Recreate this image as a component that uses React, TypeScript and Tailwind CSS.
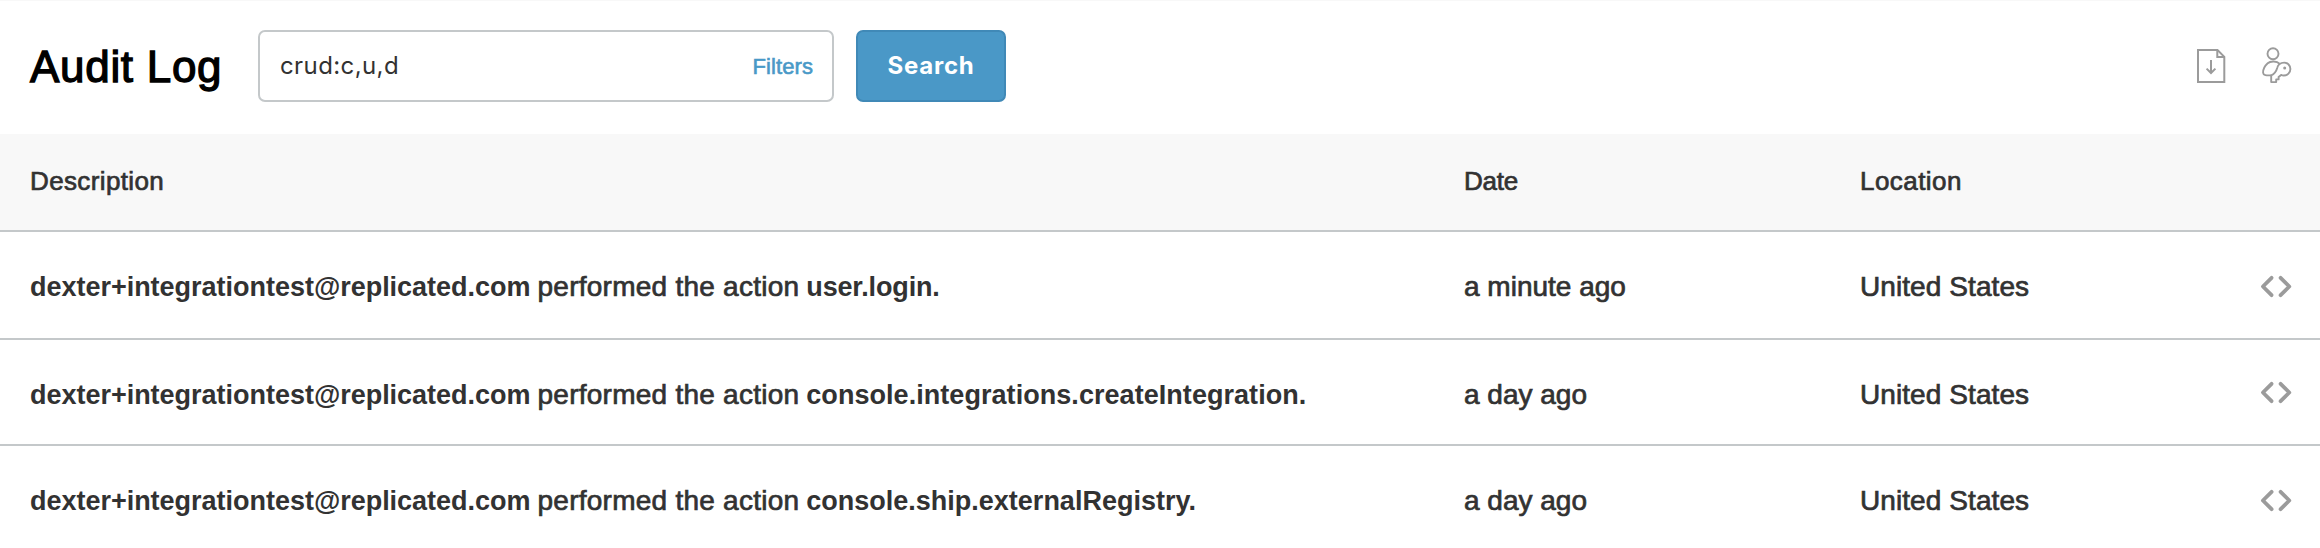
type AuditEvent = {
  actor: string;
  action: string;
  date: string;
  location: string;
  rowClass: string;
  iconClass: string;
  actionClass: string;
};

const events: AuditEvent[] = [
  {
    actor: "dexter+integrationtest@replicated.com",
    action: "user.login.",
    date: "a minute ago",
    location: "United States",
    rowClass: "h-[108px] border-b-2",
    iconClass: "mt-[3px]",
    actionClass: "tracking-[-0.15px]",
  },
  {
    actor: "dexter+integrationtest@replicated.com",
    action: "console.integrations.createIntegration.",
    date: "a day ago",
    location: "United States",
    rowClass: "h-[106px] border-b-2",
    iconClass: "mt-px",
    actionClass: "tracking-[0.05px]",
  },
  {
    actor: "dexter+integrationtest@replicated.com",
    action: "console.ship.externalRegistry.",
    date: "a day ago",
    location: "United States",
    rowClass: "h-[102px]",
    iconClass: "mt-[3px]",
    actionClass: "tracking-[0px]",
  },
];

function ExportIcon() {
  return (
    <svg width="34" height="40" viewBox="0 0 34 40" fill="none" stroke="#9b9b9b" strokeWidth="2">
      <path d="M3 4H22.5L29.3 10.8V36H3Z" />
      <path d="M22.3 4V11H29.3" />
      <path d="M16 14V27M11.6 22.6L16 27L20.4 22.6" />
    </svg>
  );
}

function AccessIcon() {
  return (
    <svg
      width="34"
      height="40"
      viewBox="0 0 34 40"
      fill="none"
      stroke="#9b9b9b"
      strokeWidth="1.9"
      strokeLinejoin="round"
    >
      <circle cx="13" cy="7.8" r="5.5" />
      <path d="M19.4 17.6C17 14.9 10.5 14.7 7.7 17.2C4.6 20 2.9 23.8 3.1 26.8C3.3 29.6 6.2 29.5 11.2 29.4" />
      <path d="M11.2 36.1V29.4C15 27.6 16.2 25.4 17.2 21.9C18 18.6 21 16.6 24.2 16.6C27.6 16.6 30.4 19.5 30.4 22.9C30.4 26.6 27.4 29.5 23.8 29.5C22.6 29.5 21.9 29.3 21.1 28.9L18.6 31V33.4H16.2V36.1Z" />
      <circle cx="24.7" cy="22" r="1.5" fill="#9b9b9b" stroke="none" />
    </svg>
  );
}

function CodeIcon() {
  return (
    <svg
      width="32"
      height="25"
      viewBox="0 0 32 25"
      fill="none"
      stroke="#9b9b9b"
      strokeWidth="3.8"
      strokeLinecap="round"
      strokeLinejoin="round"
    >
      <path d="M11.6 3.8L2.9 12.5L11.6 21.2" />
      <path d="M20.6 3.8L29.3 12.5L20.6 21.2" />
    </svg>
  );
}

export default function App() {
  return (
    <div className="h-[548px] w-[2320px] overflow-hidden bg-white font-['Liberation_Sans',Arial,sans-serif] text-[#323232]">
      <header className="flex h-[134px] items-start border-t border-[#f8f8f8] pr-[26px] pl-[30px]">
        <h1 className="mt-[42px] w-[228px] text-[44px] leading-[48px] tracking-[0.7px] whitespace-nowrap text-black [-webkit-text-stroke:1.3px_#000]">
          Audit Log
        </h1>
        <div className="mt-[29px] flex h-[72px] w-[576px] items-center justify-between rounded-[7px] border-2 border-[#c4c8ca] pr-[19px] pl-[20px]">
          <span className="font-['Inter',sans-serif] text-[24px] leading-8 tracking-[0.4px]">crud:c,u,d</span>
          <span className="pt-px text-[22px] leading-8 tracking-[0.1px] text-[#4999c7] [-webkit-text-stroke:0.6px_#4999c7]">
            Filters
          </span>
        </div>
        <button className="mt-[29px] ml-[22px] flex h-[72px] w-[150px] items-center justify-center rounded-[7px] border-2 border-[#4089b7] bg-[#4a98c7] font-['Inter',sans-serif] text-[24px] leading-8 font-bold tracking-[0.8px] text-white">
          Search
        </button>
        <div className="mt-[45px] ml-auto flex gap-[31px]">
          <ExportIcon />
          <AccessIcon />
        </div>
      </header>

      <div className="grid h-[98px] grid-cols-[1434px_396px_1fr] border-b-2 border-[#c4c8ca] bg-[#f8f8f8] pt-[31px] pl-[30px] text-[26px] leading-8 [-webkit-text-stroke:0.7px_#323232]">
        <span className="tracking-[0.37px]">Description</span>
        <span className="tracking-[-0.2px]">Date</span>
        <span className="tracking-[0.45px]">Location</span>
      </div>

      {events.map((e) => (
        <div
          key={e.action}
          className={`grid grid-cols-[1434px_396px_400px_1fr] border-[#c4c8ca] pt-[39px] pl-[30px] text-[28px] leading-8 ${e.rowClass}`}
        >
          <p className="flex h-8 items-baseline gap-[7px] whitespace-nowrap">
            <b className="text-[27px] tracking-[-0.02px]">{e.actor}</b>
            <span className="tracking-[0.25px] [-webkit-text-stroke:0.7px_#323232]">performed the action</span>
            <b className={`text-[27px] ${e.actionClass}`}>{e.action}</b>
          </p>
          <span className="[-webkit-text-stroke:0.7px_#323232]">{e.date}</span>
          <span className="tracking-[0.08px] [-webkit-text-stroke:0.7px_#323232]">{e.location}</span>
          <span className={e.iconClass}>
            <CodeIcon />
          </span>
        </div>
      ))}
    </div>
  );
}
